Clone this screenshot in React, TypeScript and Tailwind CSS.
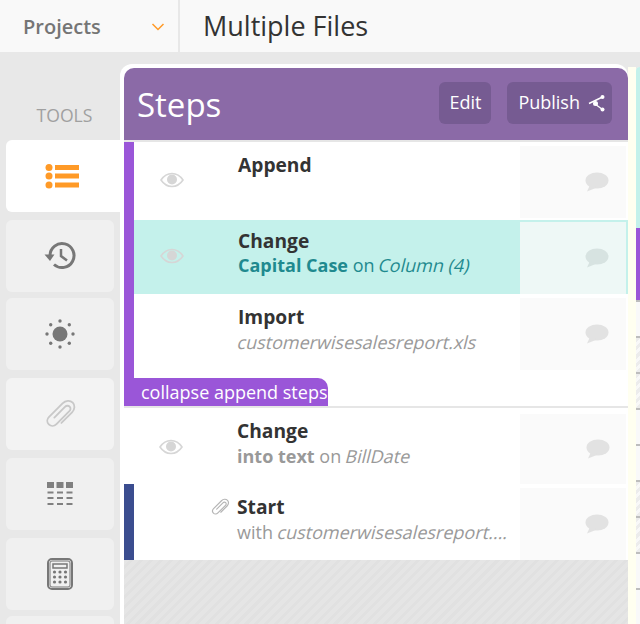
import type { ReactNode } from 'react';

const EyeIcon = () => (
  <svg width="24" height="18" viewBox="0 0 24 18" fill="none">
    <path d="M1 9C4 4.5 8 2.5 12 2.5S20 4.5 23 9C20 13.5 16 15.5 12 15.5S4 13.5 1 9Z" stroke="#d6d6d6" strokeWidth="1.6" />
    <circle cx="12" cy="8.5" r="5" fill="#d6d6d6" />
  </svg>
);

const CommentIcon = ({ color = '#e2e2e2' }: { color?: string }) => (
  <svg width="24" height="20" viewBox="0 0 24 20">
    <ellipse cx="12" cy="8.5" rx="11.5" ry="8" fill={color} />
    <path d="M5 13L2 19.5L12 15.5Z" fill={color} />
  </svg>
);

const ClipIcon = ({ size = 20, color = '#c4c4c4', width = 1.7 }: { size?: number; color?: string; width?: number }) => (
  <svg width={size} height={size} viewBox="0 0 24 24" fill="none" stroke={color} strokeWidth={width} strokeLinecap="round">
    <path d="M8 14.5L15.5 7C16.6 5.9 18 6 18.8 6.8C19.7 7.7 19.6 9 18.6 10L9.5 19.1C7.8 20.8 5.5 20.7 4.1 19.3C2.6 17.8 2.7 15.6 4.3 14L13.8 4.5C16 2.3 19.2 2.2 21 4C22.7 5.7 22.6 8.7 20.5 10.8L13 18.3" />
  </svg>
);

const ListIcon = () => (
  <svg width="34" height="26" viewBox="0 0 34 26" fill="#ff9a27">
    <circle cx="4" cy="4.5" r="3.5" />
    <circle cx="4" cy="13" r="3.5" />
    <circle cx="4" cy="22" r="3.5" />
    <rect x="10" y="2" width="24" height="5" />
    <rect x="10" y="10.5" width="24" height="5" />
    <rect x="10" y="19.5" width="24" height="5" />
  </svg>
);

const HistoryIcon = () => (
  <svg width="32" height="30" viewBox="0 0 32 30" fill="none" stroke="#777" strokeWidth="3">
    <path d="M6 14.5A12 12 0 1 1 10 23.5" />
    <path d="M0.5 13.5H10.5L6 20Z" fill="#777" stroke="none" />
    <path d="M17 8V15L23 19.5" strokeWidth="2.5" />
  </svg>
);

const SunIcon = () => (
  <svg width="30" height="30" viewBox="0 0 30 30" fill="#777">
    <circle cx="15" cy="15" r="7.5" />
    <circle cx="15" cy="2" r="1.7" />
    <circle cx="15" cy="28" r="1.7" />
    <circle cx="2" cy="15" r="1.7" />
    <circle cx="28" cy="15" r="1.7" />
    <circle cx="5.7" cy="5.7" r="1.7" />
    <circle cx="24.3" cy="5.7" r="1.7" />
    <circle cx="5.7" cy="24.3" r="1.7" />
    <circle cx="24.3" cy="24.3" r="1.7" />
  </svg>
);

const TableIcon = () => (
  <svg width="26" height="24" viewBox="0 0 26 24" fill="#808080">
    {[0, 9.5, 19].map((x) => (
      <g key={x}>
        <rect x={x} y="0" width="7" height="6" />
        <rect x={x + 0.5} y="9.5" width="6" height="2" />
        <rect x={x + 0.5} y="15" width="6" height="2" />
        <rect x={x + 0.5} y="21" width="6" height="2" />
      </g>
    ))}
  </svg>
);

const CalculatorIcon = () => (
  <svg width="26" height="32" viewBox="0 0 26 32">
    <rect x="1" y="1" width="24" height="30" rx="4" fill="#f0f0f0" stroke="#777" strokeWidth="2" />
    <rect x="3" y="3" width="20" height="26" rx="2" fill="none" stroke="#777" strokeWidth="1" />
    <rect x="6" y="6" width="14" height="4" fill="none" stroke="#777" strokeWidth="1.5" />
    {[14, 19, 24].map((y) =>
      [7.5, 13, 18.5].map((x) => <circle key={`${x}-${y}`} cx={x} cy={y} r="1.6" fill="#777" />),
    )}
  </svg>
);

const ShareIcon = () => (
  <svg width="18" height="18" viewBox="0 0 18 18" fill="#fff" stroke="#fff">
    <path d="M1 9.5L14.5 3M7 10L14.5 15.5" strokeWidth="1.4" fill="none" />
    <circle cx="7.5" cy="9.5" r="2.5" stroke="none" />
    <circle cx="14.5" cy="3" r="2" stroke="none" />
    <circle cx="14.5" cy="15.5" r="2" stroke="none" />
  </svg>
);

// the app slants the upright face, so the letters stay double-storey
const Slant = ({ children }: { children: ReactNode }) => (
  <span className="inline-block skew-x-[-14deg] not-italic">{children}</span>
);

const ToolButton = ({ children, active, dim, tight }: { children?: ReactNode; active?: boolean; dim?: boolean; tight?: boolean }) => (
  <div
    className={
      active
        ? 'ml-[6px] flex h-[72px] w-[114px] shrink-0 items-center justify-center rounded-l-md bg-white pr-[2px]'
        : `ml-[6px] flex h-[72px] w-[108px] shrink-0 items-center justify-center rounded-md ${dim ? 'bg-[#f3f3f3]' : 'bg-[#f0f0f0]'} ${tight ? 'mt-[-2px]' : ''}`
    }
  >
    {children}
  </div>
);

const CommentCell = ({ active }: { active?: boolean }) => (
  <div
    className={`mr-[2px] flex h-[72px] w-[106px] shrink-0 items-center justify-end pr-[17px] ${active ? 'bg-[#eef8f6]' : 'bg-[#fafafa]'}`}
  >
    <CommentIcon color={active ? '#d7e3e1' : '#e2e2e2'} />
  </div>
);

const stripClass = 'bg-[repeating-linear-gradient(135deg,#ececec_0,#ececec_3px,#f8f8f8_3px,#f8f8f8_6px)]';

const NextColumn = () => (
  <div className="mt-[15px] flex w-[4px] shrink-0 flex-col overflow-hidden rounded-tl-[6px] bg-[#f9f9f9]">
    <div className="h-[161px] shrink-0 bg-[#c4f1eb]" />
    <div className="h-[72px] shrink-0 bg-[#9a56d8]" />
    <div className="h-[2px] shrink-0 bg-[#bdbdbd]" />
    <div className="h-[34px] shrink-0" />
    {[true, true, false, false, true, true, false, false].map((striped, i) => (
      <div key={i} className={`h-[36px] shrink-0 border-t-2 border-[#bdbdbd] ${striped ? stripClass : ''}`} />
    ))}
  </div>
);

const App = () => (
  <div className="flex h-[624px] w-[640px] flex-col overflow-hidden bg-[#e8e8e8] font-['Open_Sans','Noto_Sans',sans-serif]">
    <header className="flex h-[52px] shrink-0 items-center bg-[#f9f9f9]">
      <div className="flex h-full w-[178px] items-center justify-between pl-[23px] pr-[13px] pt-[1px]">
        <span className="text-[20px] font-semibold text-[#757575]">Projects</span>
        <svg width="14" height="10" viewBox="0 0 14 10" fill="none" stroke="#ff9a27" strokeWidth="1.5">
          <path d="M1.5 2L7 7.5L12.5 2" />
        </svg>
      </div>
      <div className="h-full w-[2px] bg-[#e8e8e8]" />
      <h1 className="pl-[23px] text-[27px] font-normal text-[#333]">Multiple Files</h1>
    </header>

    <div className="flex min-h-0 flex-1">
      <aside className="flex w-[120px] shrink-0 flex-col">
        <div className="mb-[14px] mt-[52px] pl-[9px] text-center text-[17.6px] leading-[22px] text-[#a0a0a0]">TOOLS</div>
        <div className="flex flex-col gap-[8px]">
          <ToolButton active>
            <ListIcon />
          </ToolButton>
          <ToolButton>
            <HistoryIcon />
          </ToolButton>
          <ToolButton tight>
            <SunIcon />
          </ToolButton>
          <ToolButton dim>
            <ClipIcon size={34} color="#c8c8c8" width={1.3} />
          </ToolButton>
          <ToolButton>
            <TableIcon />
          </ToolButton>
          <ToolButton>
            <CalculatorIcon />
          </ToolButton>
          <ToolButton tight />
        </div>
      </aside>

      <main className="mt-[12px] flex w-[508px] shrink-0 flex-col rounded-t-[12px] bg-white pl-[4px] pt-[4px]">
        <div className="flex h-[72px] shrink-0 items-center justify-between rounded-t-[10px] bg-[#8b6aa7] pl-[13px] pr-[16px]">
          <h2 className="text-[33px] font-normal leading-none text-white">Steps</h2>
          <div className="flex gap-[16px] pb-[3px]">
            <div className="flex h-[42px] items-center rounded-md bg-[#765b92] px-[10px] text-[18px] text-white">Edit</div>
            <div className="flex h-[42px] items-center gap-[8px] rounded-md bg-[#765b92] pl-[11px] pr-[6px] text-[18px] text-white">
              Publish <ShareIcon />
            </div>
          </div>
        </div>
        <div className="h-[2px] shrink-0 bg-[#e6e6e6]" />

        <div className="flex shrink-0">
          <div className="w-[10px] shrink-0 bg-[#9a56d8]" />
          <div className="min-w-0 flex-1">
            <div className="flex h-[78px] items-start">
              <div className="flex w-[76px] shrink-0 justify-center pt-[29px]">
                <EyeIcon />
              </div>
              <div className="flex-1 pl-[28px] pt-[11px] text-[19.2px] font-bold leading-[24px] text-[#333]">Append</div>
              <div className="pt-[4px]">
                <CommentCell />
              </div>
            </div>
            <div className="flex h-[74px] items-start bg-[#c4f1eb]">
              <div className="flex w-[76px] shrink-0 justify-center pt-[27px]">
                <EyeIcon />
              </div>
              <div className="flex-1 pl-[28px] pt-[9px]">
                <div className="text-[19.2px] font-bold leading-[24px] text-[#333]">Change</div>
                <div className="text-[18px] leading-[24px] text-[#1f8a8f]">
                  <span className="font-bold">Capital Case</span> on <Slant>Column (4)</Slant>
                </div>
              </div>
              <div className="pt-[2px]">
                <CommentCell active />
              </div>
            </div>
            <div className="flex h-[84px] items-start">
              <div className="w-[76px] shrink-0" />
              <div className="flex-1 pl-[28px] pt-[11px]">
                <div className="text-[19.2px] font-bold leading-[24px] text-[#333]">Import</div>
                <div className="text-[18px] leading-[26px] text-[#999]">
                  <Slant>customerwisesalesreport.xls</Slant>
                </div>
              </div>
              <div className="pt-[4px]">
                <CommentCell />
              </div>
            </div>
          </div>
        </div>
        <div className="flex h-[28px] w-[204px] shrink-0 items-center rounded-tr-[10px] bg-[#9a56d8] pl-[17px] text-[18px] text-white">
          collapse append steps
        </div>
        <div className="h-[2px] shrink-0 bg-[#e6e6e6]" />

        <div className="flex h-[76px] shrink-0 items-start">
          <div className="flex w-[94px] shrink-0 justify-center pt-[30px]">
            <EyeIcon />
          </div>
          <div className="min-w-0 flex-1 pl-[19px] pt-[11px]">
            <div className="text-[19.2px] font-bold leading-[24px] text-[#333]">Change</div>
            <div className="text-[18px] leading-[26px] text-[#999]">
              <span className="font-bold">into text</span> on <Slant>BillDate</Slant>
            </div>
          </div>
          <div className="pt-[6px]">
            <div className="mr-[2px] flex h-[70px] w-[106px] items-center justify-end bg-[#fafafa] pr-[16px]">
              <CommentIcon />
            </div>
          </div>
        </div>

        <div className="flex h-[76px] shrink-0 items-start">
          <div className="h-full w-[10px] shrink-0 bg-[#3b4d8f]" />
          <div className="flex w-[103px] shrink-0 justify-end pr-[7px] pt-[13px]">
            <ClipIcon size={20} color="#b5b5b5" width={1.4} />
          </div>
          <div className="min-w-0 flex-1 pt-[11px]">
            <div className="text-[19.2px] font-bold leading-[24px] text-[#333]">Start</div>
            <div className="whitespace-nowrap text-[18px] leading-[26px] text-[#999]">
              with <Slant>customerwisesalesreport....</Slant>
            </div>
          </div>
          <div className="pt-[4px]">
            <CommentCell />
          </div>
        </div>

        <div className="min-h-0 flex-1 bg-[repeating-linear-gradient(135deg,#e5e5e5_0,#e5e5e5_4px,#e1e1e1_4px,#e1e1e1_7px)]" />
      </main>

      <div className="mt-[15px] w-[8px] shrink-0 bg-[#fffff0]" />
      <NextColumn />
    </div>
  </div>
);

export default App;
